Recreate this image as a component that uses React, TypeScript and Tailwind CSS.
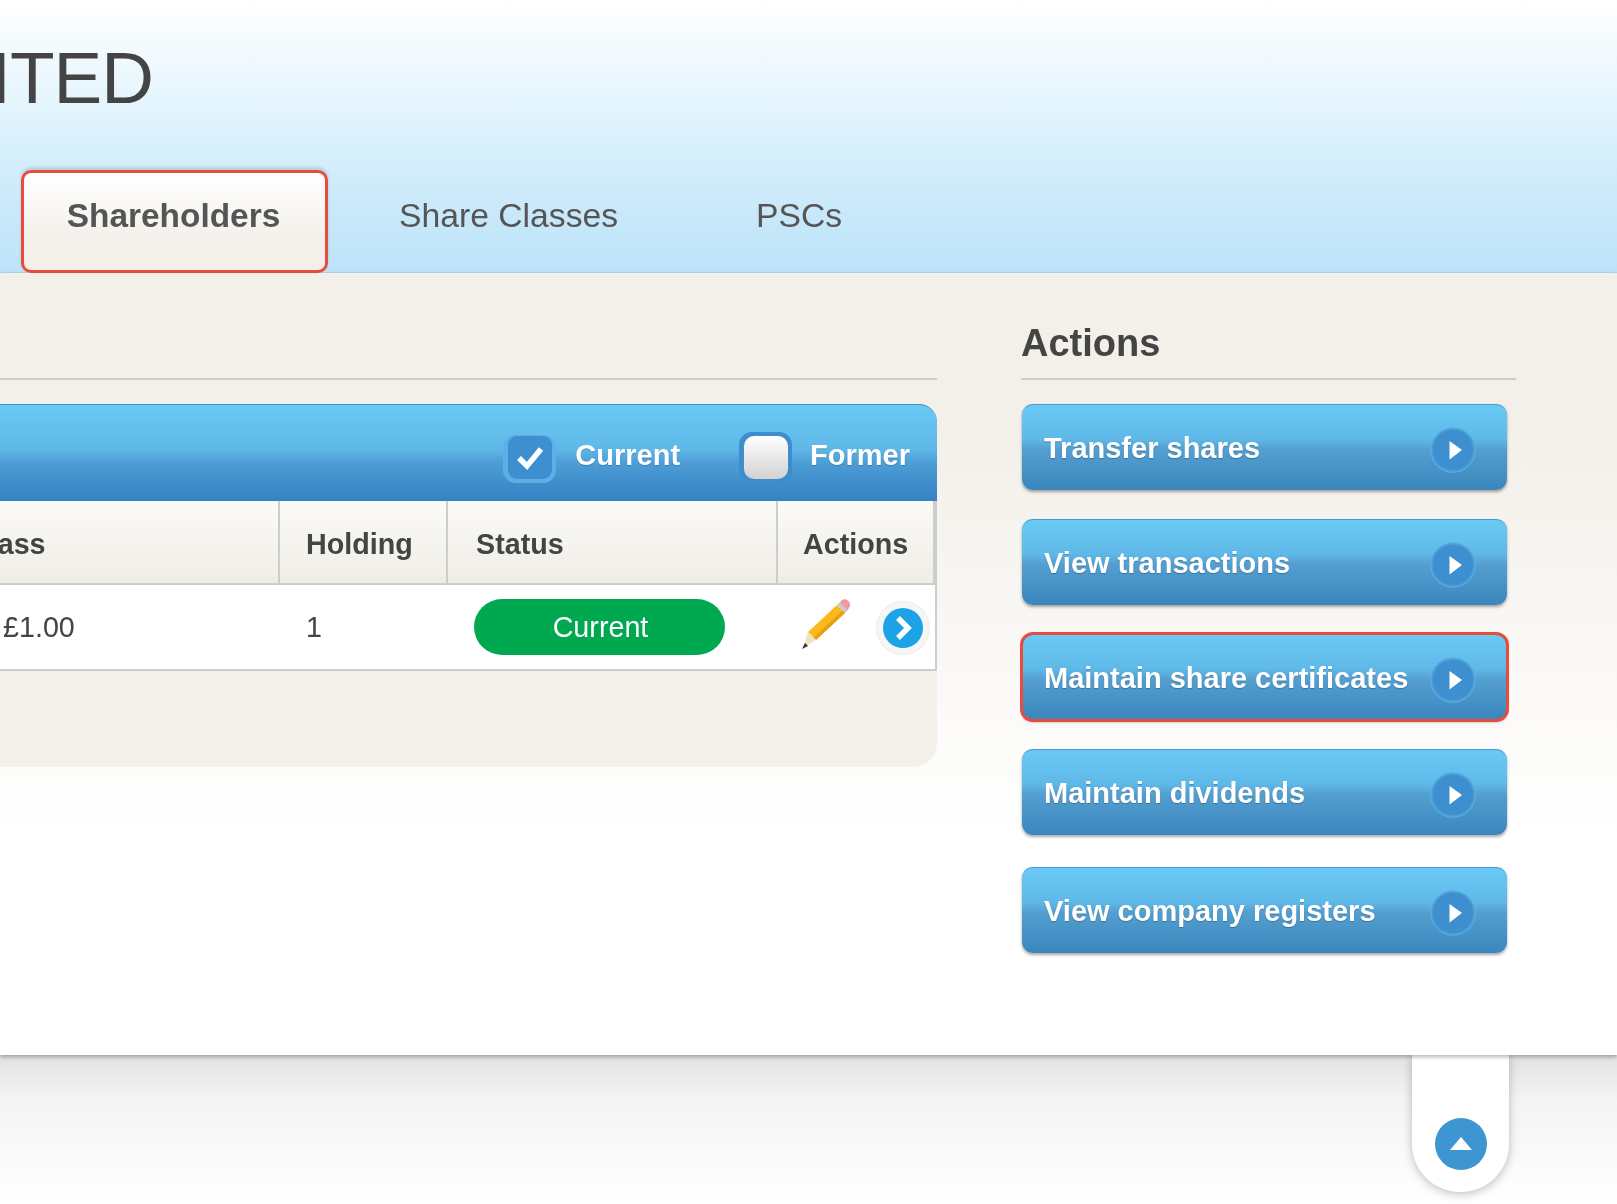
const actions = [
  { label: "Transfer shares" },
  { label: "View transactions" },
  { label: "Maintain share certificates", highlighted: true },
  { label: "Maintain dividends" },
  { label: "View company registers" },
];

const columns = [
  { title: "Class", cls: "-ml-[31px]" },
  { title: "Holding", cls: "ml-[26px]" },
  { title: "Status", cls: "ml-[28px]" },
  { title: "Actions", cls: "ml-[25px]" },
];

const PlayIcon = () => (
  <svg width="46" height="46" viewBox="0 0 46 46" className="mt-[3px] shrink-0">
    <circle cx="23" cy="23" r="22.3" fill="#4a9dd4" stroke="#5db3e3" strokeWidth="1" />
    <circle cx="23" cy="23" r="20" fill="#3d8fcf" />
    <path d="M19.5 14 L32 23 L19.5 32.5 Z" fill="#fff" />
  </svg>
);

const Pencil = () => (
  <svg width="50" height="52" viewBox="0 0 50 52" className="-mt-[6px]">
    <path d="M36 7 L44 15 L15 42 L7 34 Z" fill="#f9bb1c" />
    <path d="M41.5 12.5 L44 15 L15 42 L12.5 39.5 Z" fill="#e8a012" />
    <path d="M38.5 4.5 L46.5 12.5 L44 15 L36 7 Z" fill="#c9c9c9" />
    <path d="M41 2 C43 0.5 45.5 1 47.5 3 C49.5 5.5 49.5 8 48 10 L46.5 12.5 L38.5 4.5 Z" fill="#ee9aa0" />
    <path d="M7 34 L15 42 L2 50 Z" fill="#efe3c4" />
    <path d="M4 45 L7 48 L1 51 Z" fill="#333" />
  </svg>
);

export default function App() {
  return (
    <div className="h-[1204px] w-full overflow-hidden bg-white font-['Liberation_Sans',Arial,sans-serif] text-[#444] blur-[0.7px]">
      {/* Header */}
      <header className="h-[273px] border-b border-[#b4d4e8] bg-[linear-gradient(to_bottom,#ffffff_0%,#eaf7fe_30%,#d0ecfb_65%,#bde3f9_100%)]">
        <h1 className="-ml-[128px] pt-[38px] text-[73px] leading-[80px] tracking-[-1px] text-[#444]">LIMITED</h1>
        <nav className="mt-[52px] flex h-[103px] items-stretch text-[33.7px] text-[#555]">
          <div className="ml-[21px] flex w-[307px] justify-center rounded-[10px] border-[3px] border-[#e74c3c] bg-[linear-gradient(to_bottom,#ffffff,#f3f0ea_70%)] pt-[21px] pr-[2px] text-[33.4px] leading-[44px] font-bold text-[#555] shadow-[0_-3px_3px_rgba(0,0,0,0.12)]">
            Shareholders
          </div>
          <div className="ml-[71px] pt-[23px] leading-[44px]">Share Classes</div>
          <div className="ml-[138px] pt-[23px] leading-[44px]">PSCs</div>
        </nav>
      </header>

      {/* Main */}
      <main className="relative z-10 flex h-[782px] bg-[linear-gradient(to_bottom,#f3f0ea_0%,#f3f0ea_20%,#ffffff_72%)] shadow-[0_2px_4px_rgba(0,0,0,0.3)]">
        <section className="h-[494px] w-[937px] shrink-0 rounded-br-[24px] bg-[#f3f0ea]">
          <div className="h-[107px] border-b-2 border-[#cfccc6]" />
          <div className="mt-[24px] flex h-[97px] items-center justify-end rounded-tr-[18px] border-t border-[#3f8fc9] bg-[linear-gradient(to_bottom,#6ac9f5_0%,#5fb9e8_45%,#4d9dd6_60%,#3482c2_100%)] pt-[6px] pr-[27px] text-[29px] font-bold text-white [text-shadow:0_1px_1px_rgba(0,0,0,0.2)]">
            <span className="mt-[5px] flex h-[48px] w-[53px] items-start justify-center rounded-[13px] bg-[#5bb0e5] pt-[1px]">
              <span className="flex h-[43px] w-[44px] items-center justify-center rounded-[9px] bg-[#3e8fcf]">
                <svg width="28" height="28" viewBox="0 0 28 28">
                  <path d="M3 15 L11 23 L25 6" fill="none" stroke="#fff" strokeWidth="5.5" />
                </svg>
              </span>
            </span>
            <span className="ml-[19px]">Current</span>
            <span className="mt-[3px] ml-[59px] flex h-[52px] w-[53px] items-center justify-center rounded-[13px] bg-[#3f8dca]">
              <span className="h-[43px] w-[44px] rounded-[10px] bg-[linear-gradient(to_bottom,#ffffff,#d2d2d2)]" />
            </span>
            <span className="ml-[18px]">Former</span>
          </div>

          <div className="grid h-[170px] grid-cols-[280px_168px_330px_1fr] grid-rows-[84px_86px] border-r-2 border-[#cdcdcd] text-[28.7px]">
            {columns.map((col) => (
              <div
                key={col.title}
                className="flex items-center overflow-hidden border-r-2 border-b-2 border-[#cdcdcd] bg-[linear-gradient(to_bottom,#fbfaf7,#f0ede6)] pt-[5px] leading-none font-bold last:border-r-0"
              >
                <span className={col.cls}>{col.title}</span>
              </div>
            ))}
            <div className="flex items-center border-b-2 border-[#cdcdcd] bg-white pt-[2px] pl-[3px]">£1.00</div>
            <div className="flex items-center border-b-2 border-[#cdcdcd] bg-white pt-[2px] pl-[26px]">1</div>
            <div className="flex items-center border-b-2 border-[#cdcdcd] bg-white pl-[26px]">
              <span className="flex h-[56px] w-[251px] items-center justify-center rounded-full bg-[#00a94f] pt-[2px] pl-[2px] text-white">
                Current
              </span>
            </div>
            <div className="flex items-center border-b-2 border-[#cdcdcd] bg-white pl-[23px]">
              <Pencil />
              <span className="mt-[2px] ml-[26px] flex h-[52px] w-[52px] items-center justify-center rounded-full bg-[#f6f6f6] shadow-[0_0_1px_1px_rgba(0,0,0,0.08)]">
                <svg width="42" height="42" viewBox="0 0 42 42">
                  <circle cx="21" cy="21" r="20" fill="#1ba3e6" />
                  <path d="M16 11 L26 21 L16 31" fill="none" stroke="#fff" strokeWidth="5.5" />
                </svg>
              </span>
            </div>
          </div>
        </section>

        <aside className="ml-[84px] w-[495px] shrink-0">
          <div className="flex h-[107px] items-end border-b-2 border-[#cfccc6] pb-[13px] text-[38px] leading-[44px] font-bold">
            Actions
          </div>
          <div className="mt-[24px] flex flex-col gap-[29px] pl-[1px]">
            {actions.map((action) => (
              <div
                key={action.label}
                className={`flex h-[86px] w-[485px] items-center justify-between rounded-[11px] border-t border-[#4a9ad2] bg-[linear-gradient(to_bottom,#6ac9f5_0%,#5fb9e8_40%,#549fd0_52%,#3a86bd_100%)] pt-[2px] pr-[31px] pl-[22px] text-[29px] font-bold text-white shadow-[0_2px_3px_rgba(0,0,0,0.35)] [text-shadow:0_1px_1px_rgba(0,0,0,0.25)] last:mt-[3px] ${
                  action.highlighted ? "outline-[3px] -outline-offset-1 outline-[#e74c3c]" : ""
                }`}
              >
                <span>{action.label}</span>
                <PlayIcon />
              </div>
            ))}
          </div>
        </aside>
      </main>

      {/* Footer */}
      <footer className="h-[149px] bg-[linear-gradient(to_bottom,#e2e2e2_0%,#f4f4f4_30%,#ffffff_100%)]">
        <div className="ml-[1412px] flex h-[137px] w-[97px] items-end justify-center rounded-b-[48px] bg-white pb-[22px] shadow-[0_2px_10px_rgba(0,0,0,0.25)]">
          <svg width="52" height="52" viewBox="0 0 52 52">
            <circle cx="26" cy="26" r="26" fill="#3d96d2" />
            <path d="M26 19 L37 32 L15 32 Z" fill="#fff" />
          </svg>
        </div>
      </footer>
    </div>
  );
}
